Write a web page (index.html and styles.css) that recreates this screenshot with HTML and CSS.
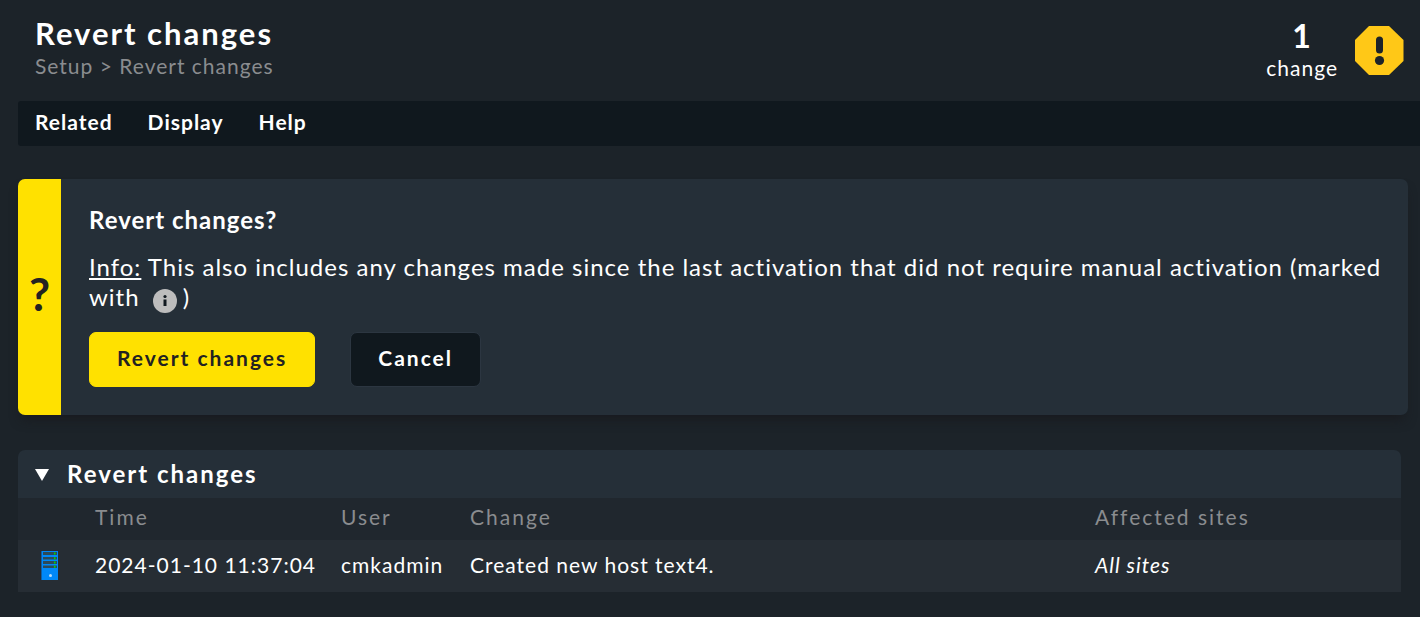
FILE: index.html
```html
<!DOCTYPE html>
<html lang="en">
<head>
<meta charset="utf-8">
<title>Revert changes</title>
<link rel="stylesheet" href="styles.css">
</head>
<body>
<header class="titlebar">
  <div class="heading">
    <h1 class="title">Revert changes</h1>
    <nav class="breadcrumb"><a href="#setup">Setup</a> &gt; <a href="#revert">Revert changes</a></nav>
  </div>
  <a class="pending" href="#changes">
    <span class="pending-text"><span class="pending-count">1</span><span>change</span></span>
    <svg class="pending-icon" viewBox="0 0 50 50" aria-hidden="true">
      <path fill="#ffc817" d="M15 0h20l14.500 14v21L35 49H15L1 35V14z"/>
      <rect x="22" y="10.500" width="7" height="17" rx="3.500" fill="#1c2329"/>
      <circle cx="25.500" cy="34.500" r="4.600" fill="#1c2329"/>
    </svg>
  </a>
</header>
<nav class="menubar">
  <button type="button">Related</button>
  <button type="button">Display</button>
  <button type="button">Help</button>
</nav>
<main class="content">
  <section class="confirm">
    <div class="confirm-mark">?</div>
    <div class="confirm-body">
      <h2 class="confirm-title">Revert changes?</h2>
      <p class="confirm-text"><u>Info:</u> This also includes any changes made since the last activation that did not require manual activation (marked with
        <svg class="info-icon" viewBox="0 0 24 24" role="img" aria-label="info"><circle cx="12" cy="12" r="12" fill="#bdbdbd"/><circle cx="12" cy="7.500" r="1.600" fill="#10181f"/><path fill="#10181f" d="M10.500 10.500h3V17h-3z"/></svg>)</p>
      <div class="actions">
        <button type="button" class="btn btn-primary">Revert changes</button>
        <button type="button" class="btn">Cancel</button>
      </div>
    </div>
  </section>
  <section class="changes">
    <h2 class="changes-title">
      <svg class="arrow" viewBox="0 0 14 12" aria-hidden="true"><path fill="#fff" d="M0 0h14L7 12z"/></svg>Revert changes
    </h2>
    <table class="table">
      <colgroup><col class="c-icon"><col class="c-time"><col class="c-user"><col class="c-change"><col class="c-sites"></colgroup>
      <thead><tr><th></th><th>Time</th><th>User</th><th>Change</th><th>Affected sites</th></tr></thead>
      <tbody><tr>
        <td><svg class="host-icon" viewBox="0 0 18 30" role="img" aria-label="host">
          <path fill="#0d5fa6" d="M0 1h17v29H0z"/><path fill="#0088f8" d="M1 1h16v29H1z"/>
          <path fill="#2c4a58" d="M2 2h14v3H2zM2 7h14v2.500H2zM2 11h14v3H2zM2 15.500h14v2.500H2z"/>
          <path fill="#00e000" d="M13 2.500h1.500v2H13zM13 7.300h1.500v2H13zM13 11.500h1.500v2H13zM13 15.700h1.500v2H13z"/>
          <circle cx="9.500" cy="25.500" r="1.500" fill="#b8defc"/></svg></td>
        <td>2024-01-10 11:37:04</td><td>cmkadmin</td><td>Created new host text4.</td><td><em>All sites</em></td>
      </tr></tbody>
    </table>
  </section>
</main>
</body>
</html>
```
FILE: styles.css
```css
* { box-sizing: border-box; }
body {
  margin: 0;
  padding-left: 18px;
  background: #1c2329;
  color: #fff;
  font: 21px/26px Lato, sans-serif;
  letter-spacing: 1px;
}
h1, h2, p { margin: 0; }
a { color: inherit; text-decoration: none; }
button { font: inherit; letter-spacing: inherit; color: inherit; cursor: pointer; }
.titlebar {
  display: flex;
  justify-content: space-between;
  align-items: flex-start;
  padding: 14px 16px 20px 17px;
}
.title { font-size: 31px; line-height: 39px; letter-spacing: 2px; }
.breadcrumb { color: #8a8c8f; }
.pending { display: flex; align-items: center; gap: 16px; padding-top: 2px; }
.pending-text { display: flex; flex-direction: column; align-items: center; }
.pending-count { font-size: 32px; line-height: 39px; font-weight: 700; }
.pending-icon { width: 50px; height: 50px; margin-top: 4px; }
.menubar {
  display: flex;
  gap: 35px;
  padding: 8px 17px 11px;
  background: #10181e;
  border-radius: 3px 0 0 3px;
}
.menubar button { padding: 0; border: 0; background: none; font-weight: 700; }
.content { padding: 33px 12px 25px 0; }
.confirm {
  display: flex;
  border-radius: 7px;
  background: #252f38;
  box-shadow: 0 8px 12px -4px rgba(24, 24, 28, 0.8);
  overflow: hidden;
}
.confirm-mark {
  flex: none;
  display: flex;
  align-items: center;
  justify-content: center;
  width: 43px;
  padding-bottom: 6px;
  background: #ffe100;
  color: #222;
  font-size: 46px;
  font-weight: 700;
  letter-spacing: 0;
}
.confirm-body { padding: 26px 14px 28px 28px; font-size: 24px; line-height: 30px; }
.confirm-title { font-size: 24px; line-height: 30px; }
.confirm-text { padding: 17px 0 20px; }
.info-icon { width: 24px; height: 24px; margin: -4px 6px; vertical-align: -3px; }
.actions { display: flex; gap: 35px; }
.btn {
  padding: 12px 27px 15px;
  border: 1px solid #2c3641;
  border-radius: 7px;
  background: #10181e;
  font-size: 21px;
  line-height: 26px;
  font-weight: 700;
  letter-spacing: 2px;
}
.btn-primary { background: #ffe100; border-color: #ffe100; color: #222; }
.changes { margin: 35px 7px 0 0; border-radius: 7px 7px 0 0; overflow: hidden; }
.changes-title {
  display: flex;
  align-items: center;
  gap: 18px;
  padding: 9px 17px;
  background: #252f38;
  font-size: 24px;
  line-height: 30px;
  letter-spacing: 2px;
}
.arrow { width: 14px; height: 12px; margin-top: 2px; }
.table { width: 100%; table-layout: fixed; border-collapse: collapse; text-align: left; }
.table th { height: 42px; padding: 0 0 4px; background: #20272e; color: #8a8c8f; font-weight: 400; letter-spacing: 2px; }
.table td { height: 52px; padding: 0 0 2px; background: #262d34; }
.c-icon { width: 77px; }
.c-time { width: 246px; }
.c-user { width: 129px; }
.c-sites { width: 306px; }
.host-icon { display: block; width: 18px; height: 30px; margin-left: 23px; }
```
